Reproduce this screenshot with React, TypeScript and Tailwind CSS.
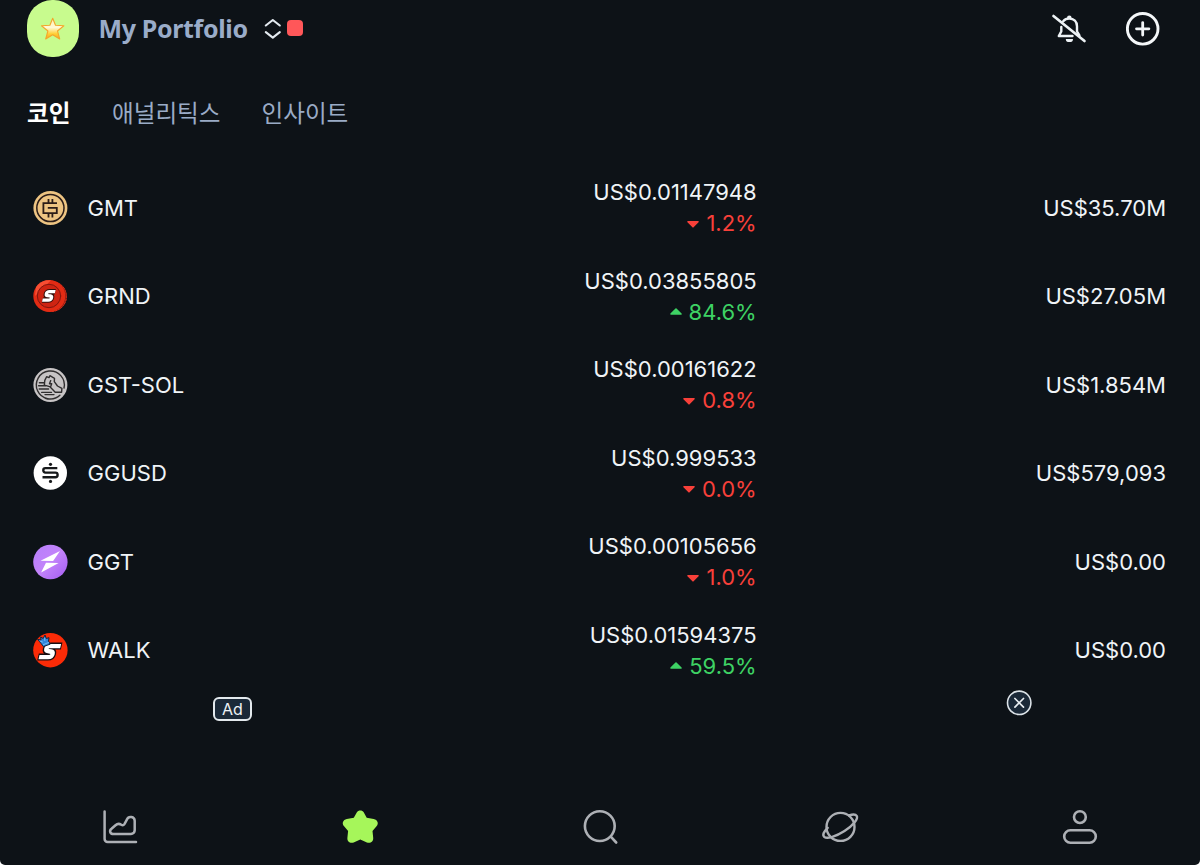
import React from "react";

const Svg = ({ w, h, className = "", children }: { w: number; h: number; className?: string; children: React.ReactNode }) => (
  <svg width={w} height={h} viewBox={`0 0 ${w} ${h}`} fill="none" strokeLinecap="round" strokeLinejoin="round" className={`block shrink-0 ${className}`}>
    {children}
  </svg>
);

const GmtIcon = () => (
  <Svg w={36} h={36}>
    <circle cx="18.4" cy="18" r="17" fill="#edc482" />
    <circle cx="18.4" cy="18" r="13.6" stroke="#2b1c17" strokeWidth="1.5" />
    <g stroke="#2b1c17" strokeWidth="1.8" strokeLinecap="butt" strokeLinejoin="miter">
      <path d="M25 13.2H11.4v9.9h13.4v-5.2h-9" />
      <path d="M16.5 9v4.2M20.4 9v4.2M16.5 23v4.4M20.4 23v4.4" />
    </g>
  </Svg>
);

const GrndIcon = () => (
  <Svg w={36} h={36}>
    <circle cx="19.4" cy="18.4" r="15.4" fill="#8f1c12" />
    <circle cx="19.4" cy="18.4" r="15" stroke="#d9301c" strokeWidth="1" strokeDasharray="1.5 1.5" />
    <circle cx="17.3" cy="18" r="16" fill="#e22b14" />
    <path d="M4 9A16 16 0 0 1 14 2.3L19 2.2 3 18z" fill="#ff5a3c" opacity=".75" />
    <circle cx="17" cy="18" r="11.7" fill="#ce2412" stroke="#80160e" strokeWidth="1" />
    <g transform="translate(4.2 0) skewX(-13)" strokeLinecap="butt">
      <path d="M22.2 13.7h-5.9c-1.7 0-2.5.7-2.5 2s.7 1.8 2.1 2l2 .2c1.4.2 2 .8 2 2.1 0 1.4-.8 2.1-2.4 2.1h-6.2" stroke="#34100c" strokeWidth="5.4" />
      <path d="M22.2 13.7h-5.9c-1.7 0-2.5.7-2.5 2s.7 1.8 2.1 2l2 .2c1.4.2 2 .8 2 2.1 0 1.4-.8 2.1-2.4 2.1h-6.2" stroke="#fff" strokeWidth="3.3" />
    </g>
  </Svg>
);

const GstIcon = () => (
  <Svg w={36} h={36}>
    <circle cx="18.4" cy="18" r="17" fill="#c7c4c5" />
    <g stroke="#302e2f" strokeWidth="1.4">
      <path d="M27.9 28.2A14 14 0 1 1 32 21M24.3 30.6a14 14 0 0 1-11 .7" />
      <path d="M12.8 13.4l1.8-3.7 2.4.9.9-1.9 4.6 2.6-.2 3.3 3.2 4.4 4.4 2.4-.3 3.8h-6.4l-5.5-5.6-5.4-1.5z" />
      <path d="M12 15.7H7.4M13.5 18.7H6.6M16.6 22H7.2M19.5 25.4H9.7M22 27.6H13" />
      <path d="M18.7 13.6l-1.2 3.2h2.2l-1 2.8" />
    </g>
  </Svg>
);

const GgusdIcon = () => (
  <Svg w={36} h={36}>
    <circle cx="18.3" cy="18" r="16.7" fill="#fff" />
    <path d="M25.3 13.1H13.4a2.1 2.1 0 0 0-2.1 2.1v.2a2.1 2.1 0 0 0 2.1 2.2h10a2.2 2.2 0 0 1 2.2 2.2v.3a2.2 2.2 0 0 1-2.2 2.2H10.5" stroke="#17191b" strokeWidth="2.4" strokeLinecap="butt" />
    <circle cx="18.5" cy="9.3" r="1.6" fill="#17191b" />
    <circle cx="18.5" cy="26.4" r="1.6" fill="#17191b" />
  </Svg>
);

const GgtIcon = () => (
  <Svg w={36} h={36}>
    <defs>
      <linearGradient id="ggt" x1="0" y1="0" x2="1" y2="1">
        <stop offset="0" stopColor="#b680fb" />
        <stop offset=".5" stopColor="#c383fa" />
        <stop offset="1" stopColor="#a45cf2" />
      </linearGradient>
    </defs>
    <circle cx="18.4" cy="18" r="17.2" fill="url(#ggt)" />
    <path d="M28 7L8.5 16.8l12.6.2zM9.1 28.4L14 18.7l12.6.2z" fill="#fff" />
  </Svg>
);

const WalkIcon = () => (
  <Svg w={36} h={36}>
    <circle cx="18.4" cy="18.2" r="17.2" fill="#fb2b07" />
    <g transform="translate(4.4 0) skewX(-13)" strokeLinecap="butt">
      <path d="M28.5 14.1H17.1c-2.3 0-3.3.9-3.3 2.5s.9 2.4 2.7 2.6l2.2.3c1.9.3 2.6 1.2 2.6 2.8 0 1.9-1.2 2.8-3.4 2.8H7.4" stroke="#170e12" strokeWidth="7" />
      <path d="M27.5 14.1H17.1c-2.3 0-3.3.9-3.3 2.5s.9 2.4 2.7 2.6l2.2.3c1.9.3 2.6 1.2 2.6 2.8 0 1.9-1.2 2.8-3.4 2.8H8.4" stroke="#fff" strokeWidth="4.3" />
    </g>
    <path d="M6 7.4l3 .6-.3-3 2.5 1.5L13 3l1.3 3.5L17 5.7l-.5 3.3 1.6 3.2-6.7 2.4-2-2.7z" fill="#3187dc" stroke="#132640" strokeWidth="1" />
    <path d="M8 9l2.5 1M12.6 6l.2 2.5M11.3 12.7l5.2-2.2" stroke="#73bbf5" strokeWidth="1" />
  </Svg>
);

type Coin = { name: string; price: string; change: string; up?: boolean; cap: string; Icon: () => React.ReactElement };

const coins: Coin[] = [
  { name: "GMT", price: "US$0.01147948", change: "1.2%", cap: "US$35.70M", Icon: GmtIcon },
  { name: "GRND", price: "US$0.03855805", change: "84.6%", up: true, cap: "US$27.05M", Icon: GrndIcon },
  { name: "GST-SOL", price: "US$0.00161622", change: "0.8%", cap: "US$1.854M", Icon: GstIcon },
  { name: "GGUSD", price: "US$0.999533", change: "0.0%", cap: "US$579,093", Icon: GgusdIcon },
  { name: "GGT", price: "US$0.00105656", change: "1.0%", cap: "US$0.00", Icon: GgtIcon },
  { name: "WALK", price: "US$0.01594375", change: "59.5%", up: true, cap: "US$0.00", Icon: WalkIcon },
];

const CoinRow = ({ name, price, change, up, cap, Icon }: Coin) => (
  <li className="grid h-[88.5px] grid-cols-[36px_520px_1fr] items-center pr-[34px] pl-[32.4px]">
    <Icon />
    <span className="pt-px pl-[19.2px]">{name}</span>
    <div className="-ml-[20px] grid grid-cols-[188.3px_1fr] items-center pt-px">
      <div className="flex flex-col items-end">
        <span className="leading-[31px]">{price}</span>
        <span className={`flex items-center gap-[7px] leading-[31px] ${up ? "text-[#3ed264]" : "text-[#f8403a]"}`}>
          <Svg w={12} h={8}>
            <path d={up ? "M1 6L6 1 11 6z" : "M1 1.8L6 6.8 11 1.8z"} fill="currentColor" stroke="currentColor" strokeWidth="1.6" />
          </Svg>
          {change}
        </span>
      </div>
      <span className="text-right">{cap}</span>
    </div>
  </li>
);

export default function App() {
  return (
    <div className="bg-white">
      <div className="flex h-[865px] w-[1200px] flex-col overflow-hidden rounded-b-[5px] bg-[#0d1217] font-['Inter','Noto_Sans_CJK_KR',sans-serif] text-[22px] text-[#f0f4f7]">
        <header className="flex h-[57px] items-center pr-[40.5px] pl-[27px]">
          <div className="flex h-[57px] w-[52px] items-center justify-center rounded-[25px] bg-[#c8fb8e]">
            <Svg w={26} h={26}>
              <defs>
                <linearGradient id="star" x1="0" y1="0" x2="0" y2="1">
                  <stop offset="0" stopColor="#fff0b0" />
                  <stop offset=".45" stopColor="#fff9d5" />
                  <stop offset=".75" stopColor="#ffcf35" />
                  <stop offset="1" stopColor="#f8a51b" />
                </linearGradient>
              </defs>
              <path d="M12.7 2.2l2.8 7.1 8.4.5-6.4 5.2 2.2 8-7-4.2-7 4.2 2.2-8L1.5 9.8l8.4-.5z" fill="url(#star)" stroke="#f3a62c" strokeWidth="1.1" />
            </Svg>
          </div>
          <h1 className="ml-[19.5px] w-[165px] font-['Noto_Sans','Noto_Sans_CJK_KR',sans-serif] text-[25px] font-bold tracking-[-0.35px] whitespace-nowrap text-[#9aacc9]">My Portfolio</h1>
          <Svg w={18} h={24}>
            <path d="M1.8 8.5L8.8 3l7 5.5M1.8 15.2l7 5.5 7-5.5" stroke="#e4eaf0" strokeWidth="2.1" />
          </Svg>
          <span className="-mt-px ml-[5.4px] h-[16px] w-[16px] rounded-[4px] bg-[#ff5759]" />
          <div className="ml-auto flex items-center gap-[38.5px]">
            <Svg w={36} h={32}>
              <g stroke="#edf2f5" strokeWidth="2.4">
                <path d="M2.5 3L33.5 28" strokeWidth="2.7" />
                <path d="M12.2 8.2c1.4-1.7 3.6-2.7 6-2.7 4.7 0 7.8 3.2 7.8 7.7v5.2l2.4 4M21.5 23H7.8l2.5-4.6v-4.4" />
              </g>
              <path d="M16 4.9a2.3 2.3 0 0 1 4.6 0zM14.8 25.9h7.2a3.6 3.2 0 0 1-7.2 0z" fill="#edf2f5" />
            </Svg>
            <Svg w={34} h={34}>
              <circle cx="16.7" cy="16.8" r="15.3" stroke="#f4f7f9" strokeWidth="2.9" />
              <path d="M16.7 10.6V23M10.5 16.8h12.4" stroke="#f4f7f9" strokeWidth="2.8" />
            </Svg>
          </div>
        </header>

        <nav className="flex h-[106.5px] items-center pt-[4px] pl-[27px] font-['Noto_Sans_CJK_KR',sans-serif] text-[23.6px] text-[#9aabc6]">
          <span className="w-[85px] font-bold text-white">코인</span>
          <span className="w-[149.5px]">애널리틱스</span>
          <span>인사이트</span>
        </nav>

        <ul>
          {coins.map((c) => (
            <CoinRow key={c.name} {...c} />
          ))}
        </ul>

        <div className="flex h-[95.5px] items-start justify-between pr-[168px] pl-[213px]">
          <span className="mt-[2px] flex h-[24px] w-[39px] items-center justify-center rounded-[6px] border-2 border-[#e3e9ed] bg-[#1b2938] text-[16px] text-[#edf2f5]">Ad</span>
          <Svg w={26} h={26} className="-mt-[5px]">
            <circle cx="13.2" cy="12.8" r="11.7" fill="#1b2938" stroke="#dce3e8" strokeWidth="1.6" />
            <path d="M8.9 8.5l8.6 8.6M17.5 8.5l-8.6 8.6" stroke="#e9eef2" strokeWidth="1.7" />
          </Svg>
        </div>

        <footer className="grid grow grid-cols-5 justify-items-center pt-[17px] text-[#adb0b5]">
          <Svg w={40} h={40}>
            <g stroke="currentColor" strokeWidth="2.5">
              <path d="M4.6 4.4v27.5a3 3 0 0 0 3 3H36" />
              <path d="M13.5 27H31a3.7 3.7 0 0 0 3.7-3.7v-9.5a4 4 0 0 0-7.7-1.4l-2.3 4.3c-.8 1.6-2 1.9-3.4 1-2.3-1.4-3.8-1.3-5.8.5l-4 3.6c-2.6 2.1-1.3 5.2 2 5.2z" />
            </g>
          </Svg>
          <Svg w={40} h={40}>
            <path d="M16.9 5.2c1.4-2.2 5.4-2.2 6.8 0l3 5.6 7 1.2c3.9.8 5.4 4.5 2.8 7.2l-4 4.7.7 6.8c.3 4-2.9 6-6.3 4.7l-6.6-2.8-6.6 2.8c-3.5 1.3-6.7-.7-6.3-4.7l.7-6.8-4-4.7c-2.6-2.7-1.2-6.4 2.7-7.2l7-1.2z" fill="#a6f65a" />
          </Svg>
          <Svg w={40} h={40}>
            <g stroke="currentColor" strokeWidth="2.6">
              <circle cx="19.8" cy="19.1" r="14.9" />
              <path d="M31 29.9l5.2 5.6" />
            </g>
          </Svg>
          <Svg w={40} h={40}>
            <g stroke="currentColor" strokeWidth="2.4">
              <circle cx="20.5" cy="19.9" r="14" />
              <path d="M29 8.4c3.7-1.2 6.7-1.1 7.7.4 1.9 3-3.8 9.8-12.2 15.3S7 32 4.4 30c-2.2-1.8-1-5.2 3.3-9.2" />
            </g>
          </Svg>
          <Svg w={40} h={40}>
            <g stroke="currentColor" strokeWidth="2.6">
              <circle cx="19.9" cy="10.1" r="5.9" />
              <rect x="4.2" y="23.3" width="31.6" height="12.4" rx="6.2" />
            </g>
          </Svg>
        </footer>
      </div>
    </div>
  );
}
